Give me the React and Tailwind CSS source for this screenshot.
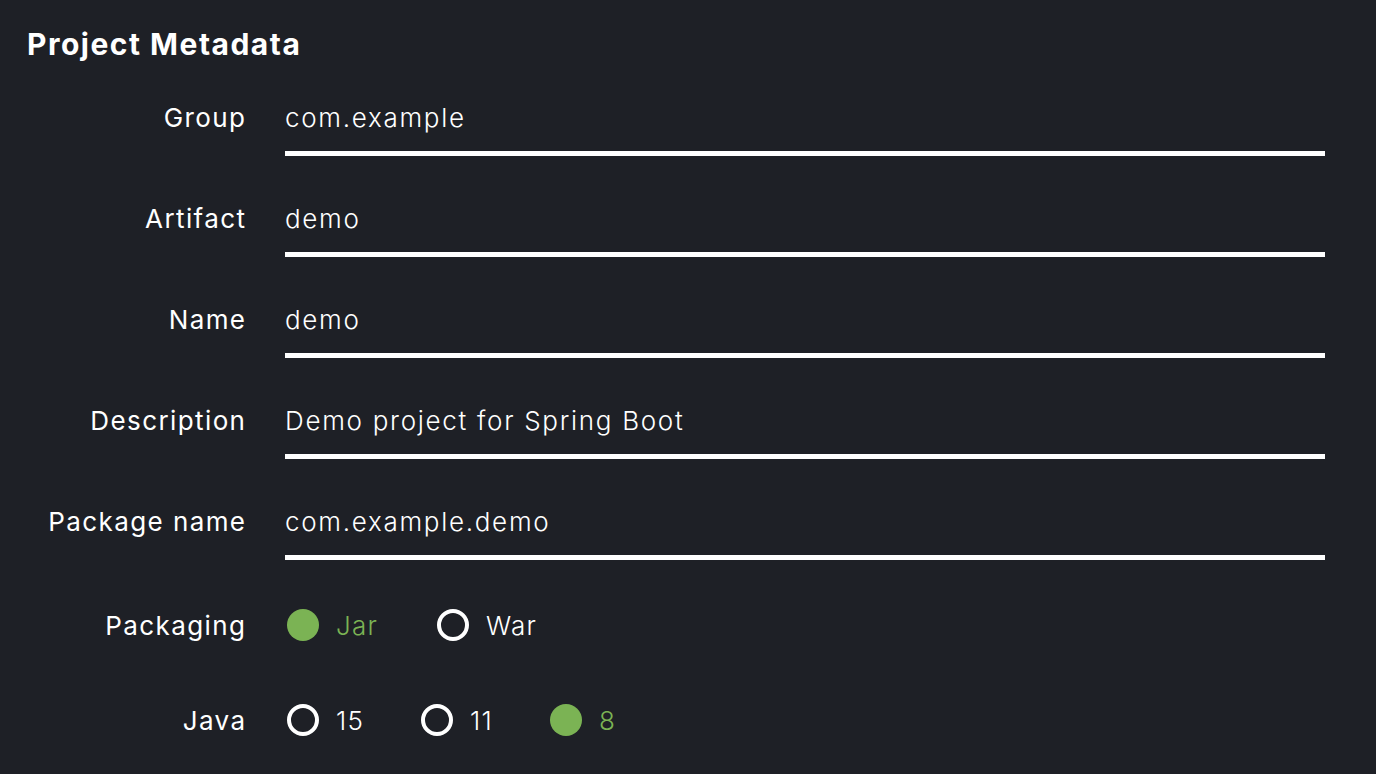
import { useState } from 'react';

const fields = [
    { label: 'Group', value: 'com.example' },
    { label: 'Artifact', value: 'demo' },
    { label: 'Name', value: 'demo' },
    { label: 'Description', value: 'Demo project for Spring Boot' },
    { label: 'Package name', value: 'com.example.demo' },
];

function Radio({ checked, label, onClick }) {
    return (
        <button onClick={onClick} className="flex items-center gap-[17px]">
            {checked ? (
                <span className="w-8 h-8 rounded-full bg-[#7bb354]" />
            ) : (
                <span className="w-8 h-8 rounded-full border-4 border-white" />
            )}
            <span className={`text-[26px] font-light tracking-[1.2px] ${checked ? 'text-[#7bb354]' : 'text-white'}`}>
                {label}
            </span>
        </button>
    );
}

export default function App() {
    const [packaging, setPackaging] = useState('Jar');
    const [java, setJava] = useState('8');

    return (
        <div
            className="w-[1376px] h-[774px] overflow-hidden bg-[#1e2026] text-white"
            style={{ fontFamily: 'Inter, "Open Sans", sans-serif' }}
        >
            <div className="h-[85px] pt-[26px] pl-[27px]">
                <h1 className="text-[30px] leading-[36px] font-bold tracking-[1.5px]">Project Metadata</h1>
            </div>

            {fields.map((f) => (
                <div key={f.label} className="grid grid-cols-[245px_1fr] gap-x-[40px] pr-[51px] mb-[30px]">
                    <div className="pt-[18px] text-[26px] leading-[30px] font-normal tracking-[1.4px] text-right mr-[-1.4px]">
                        {f.label}
                    </div>
                    <div className="pt-[18px] pb-[18px] text-[26px] leading-[30px] font-light tracking-[1.7px] border-b-[5px] border-white">
                        {f.value}
                    </div>
                </div>
            ))}

            <div className="grid grid-cols-[245px_1fr] gap-x-[42px] items-center h-[70px]">
                <div className="text-[26px] font-normal tracking-[1.4px] text-right mr-[-1.4px]">Packaging</div>
                <div className="flex items-center gap-[59px]">
                    {['Jar', 'War'].map((p) => (
                        <Radio key={p} label={p} checked={packaging === p} onClick={() => setPackaging(p)} />
                    ))}
                </div>
            </div>

            <div className="grid grid-cols-[245px_1fr] gap-x-[42px] items-center h-[70px] mt-[25px]">
                <div className="text-[26px] font-normal tracking-[1.4px] text-right mr-[-1.4px]">Java</div>
                <div className="flex items-center gap-[57px]">
                    {['15', '11', '8'].map((j) => (
                        <Radio key={j} label={j} checked={java === j} onClick={() => setJava(j)} />
                    ))}
                </div>
            </div>
        </div>
    );
}
